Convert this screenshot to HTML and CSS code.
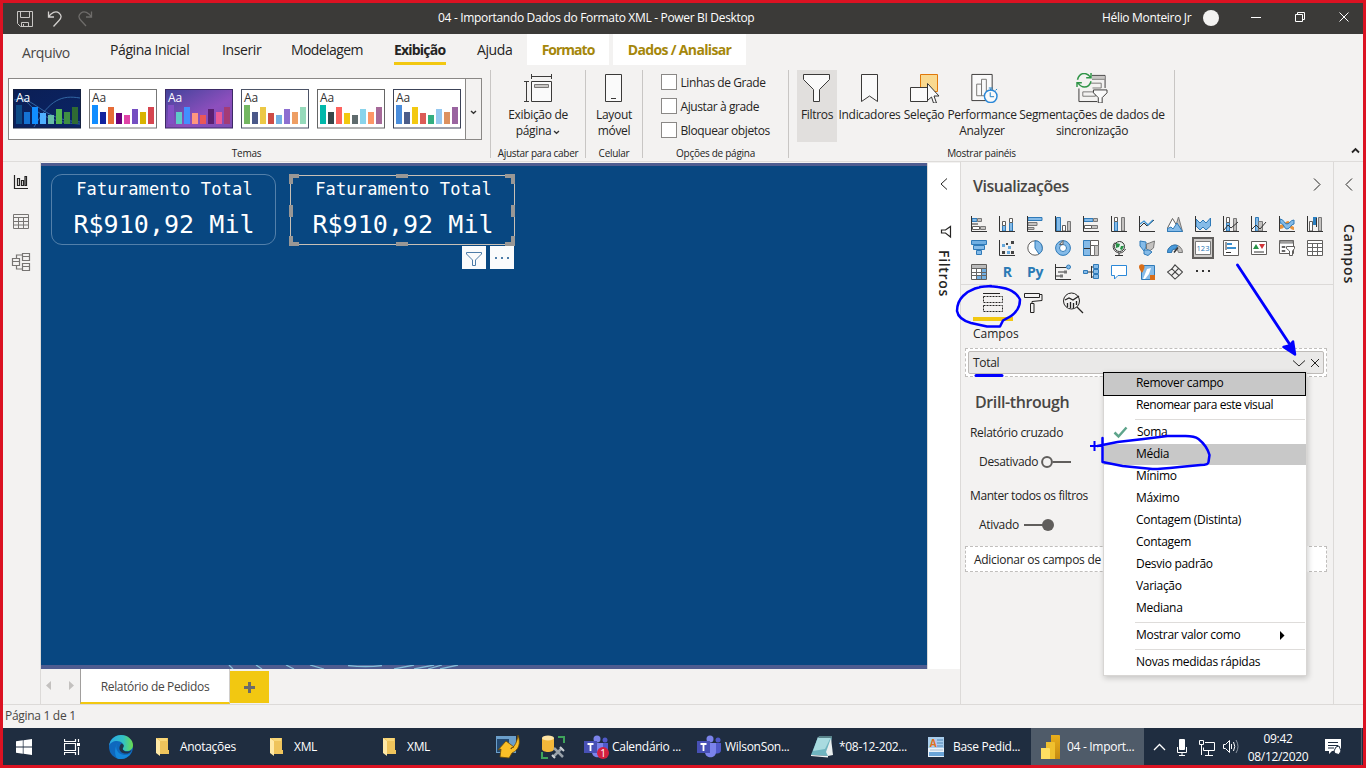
FILE: index.html
```html
<!DOCTYPE html>
<html lang="pt-BR">
<head>
<meta charset="utf-8">
<title>04 - Importando Dados do Formato XML - Power BI Desktop</title>
<link rel="stylesheet" href="styles.css">
</head>
<body>
<div class="frame">
  <header class="titlebar">
    <div class="quick">
      <svg width="16" height="16" viewBox="0 0 16 16" fill="none" stroke="#c8c6c4"><path d="M.5.5h15v15h-12l-3-3zM3.5.5v6h9v-6M4.5 15.500v-4h7v4M6.500 13v2"/></svg>
      <svg width="16" height="16" viewBox="0 0 16 16" fill="none" stroke="#d2d0ce" stroke-width="1.300"><path d="M1.500.5v5.500h5.500M1.500 6C4 1.500 9-.5 12 2s2.500 5 0 7.500l-5.500 6"/></svg>
      <svg width="16" height="16" viewBox="0 0 16 16" fill="none" stroke="#6e6c6a" stroke-width="1.300"><path d="M14.500.5v5.500H9M14.500 6C12 1.500 7-.5 4 2s-2.500 5 0 7.500l5 5.500"/></svg>
    </div>
    <div class="doc-title">04 - Importando Dados do Formato XML - Power BI Desktop</div>
    <div class="account"><span>Hélio Monteiro Jr</span><i class="avatar"></i></div>
    <svg class="window-buttons" width="110" height="31" viewBox="1250 3 110 31" fill="none" stroke="#fff"><path d="M1251 17.500h10M1295.500 14.500h7v7h-7zM1297.500 14.500v-2h7v7h-2M1339.500 12.500l9 9M1348.500 12.500l-9 9"/></svg>
  </header>

  <nav class="tabs">
    <span class="tab file">Arquivo</span>
    <span class="tab inicial">Página Inicial</span>
    <span class="tab inserir">Inserir</span>
    <span class="tab modelagem">Modelagem</span>
    <span class="tab current">Exibição</span>
    <span class="tab ajuda">Ajuda</span>
    <span class="tab context formato">Formato</span>
    <span class="tab context dados">Dados / Analisar</span>
  </nav>

  <section class="ribbon">
    <div class="group temas">
      <div class="gallery">
        <svg class="thumbs" width="456" height="60" viewBox="9 79 456 60">
          <defs>
            <linearGradient id="purple" x2="1" y2="1"><stop stop-color="#41439a"/><stop offset=".6" stop-color="#8d4fbd"/><stop offset="1" stop-color="#7d4fb4"/></linearGradient>
            <linearGradient id="navy" x2="1" y2="1"><stop stop-color="#0b1f55"/><stop offset="1" stop-color="#0a2466"/></linearGradient>
          </defs>
          <g stroke="#474747">
            <rect x="13.500" y="89.500" width="67" height="38.500" fill="url(#navy)" stroke="#14203f"/>
            <rect x="89.500" y="89.500" width="67" height="38.500" fill="#fff" stroke="#777"/>
            <rect x="165.500" y="89.500" width="67" height="38.500" fill="url(#purple)" stroke="#3d2a66"/>
            <rect x="241.500" y="89.500" width="67" height="38.500" fill="#fff" stroke="#4c5366"/>
            <rect x="317.500" y="89.500" width="67" height="38.500" fill="#fff" stroke="#666"/>
            <rect x="393.500" y="89.500" width="67" height="38.500" fill="#fff" stroke="#3c4358"/>
          </g>
          <path d="M20 94c12 14 22 28 60 30M14 100c20-6 26 20 66 22M34 127c16-28 28-32 46-29" fill="none" stroke="#3c78b4" opacity=".8"/>
          <g transform="translate(16 124)"><path fill="#0d4b86" d="M0 0v-19h6V0z"/><path fill="#1573d3" d="M8 0v-12h6V0z"/><path fill="#118dff" d="M16 0v-17h6V0z"/><path fill="#4fb0ff" d="M24 0v-11h6V0z"/><path fill="#66bda8" d="M32 0v-9h6V0z"/><path fill="#53b552" d="M40 0v-15h6V0z"/><path fill="#3f8f43" d="M48 0v-12h6V0z"/><path fill="#2f6b33" d="M56 0v-17h6V0z"/></g>
          <g transform="translate(92 124)"><path fill="#118dff" d="M0 0v-19h6V0z"/><path fill="#12239e" d="M8 0v-12h6V0z"/><path fill="#e66c37" d="M16 0v-17h6V0z"/><path fill="#6b007b" d="M24 0v-11h6V0z"/><path fill="#e044a7" d="M32 0v-9h6V0z"/><path fill="#744ec2" d="M40 0v-15h6V0z"/><path fill="#d9b300" d="M48 0v-12h6V0z"/><path fill="#d64550" d="M56 0v-17h6V0z"/></g>
          <g transform="translate(168 124)"><path fill="#8250c4" d="M0 0v-19h6V0z"/><path fill="#5ecbc8" d="M8 0v-12h6V0z"/><path fill="#438fff" d="M16 0v-17h6V0z"/><path fill="#ff977e" d="M24 0v-11h6V0z"/><path fill="#eb5757" d="M32 0v-9h6V0z"/><path fill="#5b2071" d="M40 0v-15h6V0z"/><path fill="#ec5a96" d="M48 0v-12h6V0z"/><path fill="#a43b76" d="M56 0v-17h6V0z"/></g>
          <g transform="translate(244 124)"><path fill="#73b761" d="M0 0v-19h6V0z"/><path fill="#4a588a" d="M8 0v-12h6V0z"/><path fill="#ecc846" d="M16 0v-17h6V0z"/><path fill="#cd4c46" d="M24 0v-11h6V0z"/><path fill="#71afe2" d="M32 0v-9h6V0z"/><path fill="#8d6fd1" d="M40 0v-15h6V0z"/><path fill="#ee9e64" d="M48 0v-12h6V0z"/><path fill="#95dabb" d="M56 0v-17h6V0z"/></g>
          <g transform="translate(320 124)"><path fill="#01b8aa" d="M0 0v-19h6V0z"/><path fill="#374649" d="M8 0v-12h6V0z"/><path fill="#fd625e" d="M16 0v-17h6V0z"/><path fill="#f2c80f" d="M24 0v-11h6V0z"/><path fill="#5f6b6d" d="M32 0v-9h6V0z"/><path fill="#8ad4eb" d="M40 0v-15h6V0z"/><path fill="#fe9666" d="M48 0v-12h6V0z"/><path fill="#a66999" d="M56 0v-17h6V0z"/></g>
          <g transform="translate(396 124)"><path fill="#4a8ddc" d="M0 0v-19h6V0z"/><path fill="#4c5d8a" d="M8 0v-12h6V0z"/><path fill="#f3c911" d="M16 0v-17h6V0z"/><path fill="#dc5b57" d="M24 0v-11h6V0z"/><path fill="#33ae81" d="M32 0v-9h6V0z"/><path fill="#95c8f0" d="M40 0v-15h6V0z"/><path fill="#dd915f" d="M48 0v-12h6V0z"/><path fill="#9a64a0" d="M56 0v-17h6V0z"/></g>
          <g class="aa"><text x="16" y="102" fill="#fff">Aa</text><text x="92" y="102">Aa</text><text x="168" y="102" fill="#fff">Aa</text><text x="244" y="102">Aa</text><text x="320" y="102">Aa</text><text x="396" y="102">Aa</text></g>
        </svg>
        <div class="more"><svg width="7" height="5" viewBox="0 0 7 5" fill="none" stroke="#333" stroke-width="1.400"><path d="M1 1l2.500 2.300L6 1"/></svg></div>
      </div>
      <div class="caption">Temas</div>
    </div>

    <div class="group caber">
      <div class="tool"><svg width="30" height="30" viewBox="523 73 30 30" fill="none" stroke="#3b3a39"><path d="M531.500 81.500h20v20h-20z" fill="#fafafa"/><path d="M534.500 84.500h14v3h-14z" fill="#c8c6c4" stroke="#797775"/><path d="M531.500 74v5M551.500 74v5M531.500 76.500h20M524 81.500h5M524 101.500h5M526.500 81.500v20"/></svg>
        <span>Exibição de</span><span>página<svg class="caret" width="7" height="5" viewBox="0 0 7 5" fill="none" stroke="#333" stroke-width="1.300"><path d="M1 1l2.500 2.300L6 1"/></svg></span></div>
      <div class="caption">Ajustar para caber</div>
    </div>

    <div class="group celular">
      <div class="tool"><svg width="30" height="30" viewBox="599 73 30 30" fill="#fafafa" stroke="#3b3a39"><path d="M605.500 74.500h16v27h-16zM611 98.500h5"/></svg>
        <span>Layout</span><span>móvel</span></div>
      <div class="caption">Celular</div>
    </div>

    <div class="group opcoes">
      <div class="checks">
        <label><i></i><span>Linhas de Grade</span></label>
        <label><i></i><span>Ajustar à grade</span></label>
        <label><i></i><span>Bloquear objetos</span></label>
      </div>
      <div class="caption">Opções de página</div>
    </div>

    <div class="group paineis">
      <div class="tools">
        <div class="tool pressed"><svg width="30" height="30" viewBox="802 73 30 30" fill="#fafafa" stroke="#3b3a39"><path d="M803.500 74.500h26v5l-10 10v12h-6v-12l-10-10z"/></svg><span>Filtros</span></div>
        <div class="tool indic"><svg width="31" height="30" viewBox="854 73 31 30" fill="#fafafa" stroke="#3b3a39"><path d="M861.500 74.500h16v27l-8-5.500-8 5.500z"/></svg><span>Indicadores</span></div>
        <div class="tool selec"><svg width="32" height="30" viewBox="908 73 32 30" fill="#fafafa" stroke="#3b3a39"><path d="M920.500 74.500h17v17h-17z" fill="#f9d98f" stroke="#e0780a"/><path d="M910.500 87.500h17v14h-17z"/><path d="M927.500 83.500v17l4-3.500 2 6h3l-2.500-7h5z" stroke="#333"/></svg><span>Seleção</span></div>
        <div class="tool perf"><svg width="34" height="31" viewBox="965 73 34 31" fill="#fafafa" stroke="#3b3a39"><path d="M971.500 74.500h21v27h-21z"/><path d="M976.500 84.500h5v12h-5zM981.500 79.500h5v17h-5z" stroke="#797775"/><circle cx="991" cy="97" r="6.500" stroke="#2b88d8" stroke-width="1.500"/><path d="M989 88.500h4M991 89v2M996 91l1.500-1.500M990.500 93v4.500h4" stroke="#1b7cc4" fill="none"/></svg><span>Performance</span><span>Analyzer</span></div>
        <div class="tool segm"><svg width="34" height="31" viewBox="1075 72 34 31" fill="none" stroke="#3b3a39"><path d="M1078.500 88v13.500h19M1092 74.500h13.500v13"/><path d="M1092 75h13v3h-13z" fill="#c8c6c4" stroke="none"/><path d="M1092 78.500h13M1091 82.500h10.500v5h-9M1082.500 91.500h13v4.500h-13z" stroke="#797775"/><path d="M1093.500 89.500h14v3l-5 5v5.500h-4v-5.500l-5-5z" fill="#fafafa"/><path d="M1077 79c1-4 4-6.500 7-6.500s5 2 6.500 4M1091 72v5h-5M1091 80.500c-1 4-4 6-7 6s-5-2-6.500-4M1076.500 86.500v-4.500h5" stroke="#2f9447" stroke-width="1.500"/></svg><span>Segmentações de dados de</span><span>sincronização</span></div>
      </div>
      <div class="caption">Mostrar painéis</div>
    </div>
    <svg class="collapse" width="9" height="7" viewBox="0 0 9 7" fill="none" stroke="#252423" stroke-width="1.800"><path d="M1 5.500l3.500-3.500L8 5.500"/></svg>
  </section>

  <main class="work">
    <aside class="rail">
      <svg width="38" height="120" viewBox="3 163 38 120" fill="none" stroke="#767472"><path d="M14.500 175v13.500H28M17.500 178.500h2v7h-2zM21.500 180.500h2v5h-2zM25 176.500h1.500v9H25z" stroke="#252423" stroke-width="1.200"/><path d="M13.500 214.500h15v14h-15zM13.500 217.500h15M13.500 221.500h15M13.500 225h15M18.500 217v11M23.500 217v11"/><path d="M12.500 258.500h7v7h-7zM12.500 261.500h7M22.500 253.500h7v7h-7zM22.500 256.500h7M22.500 263.500h7v7h-7zM22.500 266.500h7M16.500 258v-3h6M16.500 266v3h6" stroke-width="1.200"/></svg>
    </aside>

    <div class="center">
      <div class="stage">
        <div class="canvas">
          <svg class="arcs" width="260" height="4" viewBox="0 0 260 4" fill="none" stroke="#86bdd8" stroke-width="1.300"><path d="M1 0l4 4M28 0l6 4M58 0l8 4M82 0l14 4M120 .500q18 2 34 0M166 4l20-4M186 4l20-4M200 4l14-4M212 4l18-4"/></svg>
          <div class="card one"><span class="measure">Faturamento Total</span><span class="value">R$910,92 Mil</span></div>
          <div class="card two"><span class="measure">Faturamento Total</span><span class="value">R$910,92 Mil</span>
            <svg class="handles" width="228" height="74" viewBox="0 0 228 74" fill="#999795"><path d="M1 1h10v4H5v6H1zM217 1h10v10h-4V5h-6zM1 63h4v6h6v4H1zM223 63h4v10h-10v-4h6zM108 1h12v4h-12zM108 69h12v4h-12zM1 32h4v12H1zM223 32h4v12h-4z"/></svg>
            <div class="card-tools">
              <i><svg width="24" height="23" viewBox="0 0 24 23" fill="none" stroke="#4d7ca8"><path d="M4.500 6.500h15v1.500l-6 6v5.500h-3V14l-6-6z"/></svg></i>
              <i><svg width="24" height="23" viewBox="0 0 24 23" fill="#4d7ca8"><path d="M5 11h2v2H5zM11 11h2v2h-2zM17 11h2v2h-2z"/></svg></i>
            </div>
          </div>
        </div>
        <aside class="filters">
          <svg width="32" height="80" viewBox="928 163 32 80" fill="none" stroke="#252423"><path d="M947 178.500l-6 5.500 6 5.500"/><path d="M950.500 226.500v10.500l-5-4h-4v-3h4z" stroke-width="1.200"/></svg>
          <span class="vertical">Filtros</span>
        </aside>
      </div>
      <div class="pages">
        <svg width="39" height="35" viewBox="41 669 39 35" fill="#c3c1bf"><path d="M51 681v9l-5-4.500zM69 681v9l5-4.500z"/></svg>
        <div class="page">Relatório de Pedidos</div>
        <div class="add"><svg width="11" height="11" viewBox="0 0 11 11" fill="#6b6a68"><path d="M4 0h3v4h4v3H7v4H4V7H0V4h4z"/></svg></div>
      </div>
    </div>

    <aside class="viz">
      <div class="viz-head"><h2>Visualizações</h2><svg width="8" height="13" viewBox="0 0 8 13" fill="none" stroke="#252423"><path d="M1 .5l6 6-6 6"/></svg></div>
      <div class="viz-grid">
        <svg viewBox="0 0 16 16"><path class="b" d="M1 2.500h5v3H1z"/><path class="g" d="M6.500 2.500h4v3h-4zM9.500 10.500h5v3h-5z"/><path class="w" d="M1.500 10.500h7v3h-7z"/><path class="k" d="M.5 0v15.500H16M1 8h6"/></svg>
        <svg viewBox="0 0 16 16"><path class="b" d="M3.500 9.500h3V15h-3zM10.500 6.500h3V15h-3z"/><path class="w" d="M3.500 5.500h3v4h-3zM10.500 2.500h3v4h-3z"/><path class="k" d="M.5 0v15.500H16"/></svg>
        <svg viewBox="0 0 16 16"><path class="b" d="M1 1.500h14v3H1z"/><path class="g" d="M1 6.500h9v3H1zM1 11.500h6v2H1z"/><path class="k" d="M.5 0v15.500H16"/></svg>
        <svg viewBox="0 0 16 16"><path class="b" d="M1.500 1.500h4V15h-4z"/><path class="w" d="M7.500 9.500h3V15h-3z"/><path class="g" d="M12.500 5.500h3V15h-3z"/><path class="k" d="M.5 0v15.500H16"/></svg>
        <svg viewBox="0 0 16 16"><path class="b" d="M1 2.500h9v3H1z"/><path class="g" d="M10.500 2.500h4v3h-4zM8.500 9.500h6v3h-6z"/><path class="w" d="M1.500 9.500h7v3h-7z"/><path class="k" d="M.5 0v15.500H16"/></svg>
        <svg viewBox="0 0 16 16"><path class="b" d="M3.500 5.500h3V15h-3z"/><path class="w" d="M3.500 1.500h3v4h-3z"/><path class="g" d="M10.500 1.500h3V15h-3z"/><path class="k" d="M.5 0v15.500H16"/></svg>
        <svg viewBox="0 0 16 16"><path class="k" d="M.5 0v15.500H16M1 11l4-4 3 3 7-6"/><path d="M1 8l4-3 4 4 5-5" fill="none" stroke="#3a8fcf" stroke-width="1.300"/></svg>
        <svg viewBox="0 0 16 16"><path class="g" d="M11.500 1l4 14.500H7z"/><path class="w" d="M5.500 2.500l8 13H.5V12z"/><path class="b" d="M.5 15.500v-3L4 11l2 2 4-6 5.500 8.500z"/></svg>
        <svg viewBox="0 0 16 16"><path class="b" d="M1 3l4 4 3-3 3 3 4.500-5v8L11 14l-3-3-3 3-4-4z"/><path class="k" d="M.5 0v15.500H16"/></svg>
        <svg viewBox="0 0 16 16"><path class="b" d="M3.500 6.500h3V15h-3z"/><path class="w" d="M3.500 1.500h3v5h-3z"/><path class="g" d="M10.500 2.500h3V15h-3z"/><path class="k" d="M.5 0v15.500H16M1 14l4-5 3 3 7-6"/></svg>
        <svg viewBox="0 0 16 16"><path class="b" d="M4.500 1.500h3V15h-3z"/><path class="g" d="M7.500 5.500h4V15h-4z"/><path class="k" d="M.5 0v15.500H16M1 13l4-4 4 4 6-7"/></svg>
        <svg viewBox="0 0 16 16"><path d="M1 9c5-1 6-4 8-4s3 5 6 6v3c-4 0-5-5-7-5s-3 4-7 4z" fill="#e8923c"/><path class="b" d="M1 3c4 0 4 5 7 5s3-4 7-4v4c-3 0-4 5-7 5S5 7 1 7z"/><path class="k" d="M.5 0v15.500H16"/></svg>
        <svg viewBox="0 0 16 16"><path class="w" d="M2.500 5.500h3V15h-3z"/><path d="M6 1h4v8H6z" fill="#2b7fc0"/><path class="g" d="M11.500 1.500h3V15h-3z"/><path class="k" d="M.5 0v15.500H16M9.500 2v9"/></svg>

        <svg viewBox="0 0 16 16"><path d="M.5.5h15v4H.5z" fill="#71afe2" stroke="#2f7ab8"/><path class="b" d="M2.500 5.500h11v4h-11zM5.500 10.500h5v4h-5z"/></svg>
        <svg viewBox="0 0 16 16"><path class="k" d="M.5 0v15.500H16"/><path d="M3 4h3v3H3zM9 6h3v3H9zM8 11h3v3H8z" fill="#65a7dc"/><path d="M7 3h2v2H7zM12 1h3v3h-3zM12 11h3v3h-3zM3 11h3v3H3z" fill="#444"/></svg>
        <svg viewBox="0 0 16 16"><circle class="w" cx="8" cy="8" r="7.200"/><path class="b" d="M8 .8A7.200 7.200 0 0 1 12 14L8 8z"/></svg>
        <svg viewBox="0 0 16 16"><circle cx="8" cy="8" r="5.500" fill="none" stroke="#85bbe8" stroke-width="4"/><circle cx="8" cy="8" r="7.400" fill="none" stroke="#2f7ab8"/><circle cx="8" cy="8" r="3.500" fill="#fff" stroke="#2f7ab8"/><path d="M8 .5v4H4.500z" fill="#ddd" stroke="#666"/></svg>
        <svg viewBox="0 0 16 16"><path class="b" d="M.5.5h7v15h-7z"/><path class="k" d="M1 8.500h6"/><path class="w" d="M7.500.5h8v5h-8zM7.500 5.500h4v10h-4z"/><path class="g" d="M11.500 5.500h4v10h-4z"/></svg>
        <svg viewBox="0 0 16 16"><circle cx="8.500" cy="6.500" r="5" fill="#e8f2ec" stroke="#333"/><path d="M5 3l4 1-1 3-3 1zM10 6h3l-2 4-2-1z" fill="#279246"/><path class="k" d="M4 2.500c-4 4-1 10 4.500 10.500 3 0 5-2 6-4M8 13v2M4 15.500h8"/></svg>
        <svg viewBox="0 0 16 16"><path class="b" d="M1 1l6 1v5l-2 4-4-5z"/><path class="g" d="M7.500 4l3-1 5-2-1 7-4 3-3-2z"/><path class="b" d="M5 10h5l3 2-4 3.500L5 14z"/></svg>
        <svg viewBox="0 0 16 16"><path class="g" d="M.5 12.500A7.500 7.500 0 0 1 15.500 12.500h-4a3.500 3.500 0 0 0-7 0z"/><path d="M.5 12.500A7.500 7.500 0 0 1 10.500 5.500L8.500 9a3.700 3.700 0 0 0-4 3.500z" fill="#4a9bdc" stroke="#2f7ab8"/><path class="k" d="M7 12.500l4-5" stroke-width="1.500"/></svg>
        <span class="chosen"><svg viewBox="0 0 16 16"><path d="M.5 1.500h15v13H.5z" fill="#fff" stroke="#777"/><text x="8" y="11" class="num">123</text></svg></span>
        <svg viewBox="0 0 16 16"><path class="w" d="M.5.5h15v15H.5z"/><path d="M4 3h5v2H4zM4 7h9v2H4z" fill="#3a8fcf"/><path class="k" d="M3 2v8M3 12.500h5"/></svg>
        <svg viewBox="0 0 16 16"><path class="w" d="M.5 1.500h15v13H.5z"/><path d="M2 9l3-5 3 5z" fill="#279246"/><path d="M8 4h6l-3 5z" fill="#d13438"/><path d="M3 12h10" class="k"/></svg>
        <svg viewBox="0 0 16 16"><path class="w" d="M.5.5h14v13H.5z"/><path class="g" d="M1 1h13v2H1z"/><path class="o" d="M3 6.500h3v1H3zM3 10.500h3v1H3z"/><path class="w" d="M7.500 6.500h8v2L13.500 11v4.500h-3V11l-3-2.500z"/></svg>
        <svg viewBox="0 0 16 16"><path class="w" d="M.5.5h15v15H.5z"/><path class="o" d="M.5 3.500h15M.5 7.500h15M.5 11.500h15M5.500 3v12M10.500 3v12"/></svg>

        <svg viewBox="0 0 16 16"><path class="w" d="M.5.5h15v15H.5z"/><path d="M1 1h14v3H1z" fill="#bbb"/><path d="M5 12h10v3H5zM11 5h4v10h-4z" fill="#71afe2"/><path class="o" d="M.5 4.500h15M.5 8.500h15M.5 11.500h15M5.500 4v11M10.500 4v11"/></svg>
        <span class="lang">R</span>
        <span class="lang">Py</span>
        <svg viewBox="0 0 16 16"><path class="k" d="M.5 0v15.500H16M1 3.500h10M3 8h7M1 12h4"/><circle cx="13.500" cy="3" r="2" class="b"/><path d="M9 6.500h3v3H9zM5 10.500h3v3H5z" fill="#777"/></svg>
        <svg viewBox="0 0 16 16"><path class="k" d="M5 8h5M8.500 2v12M9 3h3M9 13h3"/><path class="b" d="M.5 6.500h4v3h-4zM10.500.5h5v4h-5zM10.500 5.500h5v4h-5zM10.500 10.500h5v4h-5z"/></svg>
        <svg viewBox="0 0 16 16"><path d="M.5 1.500h15v10H7L3.500 15v-3.500h-3z" fill="#fff" stroke="#2b88d8"/></svg>
        <svg viewBox="0 0 16 16"><path class="b" d="M2.500 1.500h13v14h-13z"/><path d="M8 5l4-1-2 6-4 5H4z" fill="#fff"/><path d="M0 3a2.700 2.700 0 0 1 5.500 0C5.500 5 3 9 3 9S0 5 0 3z" fill="#d86d18"/><path d="M11 11h5v5h-5z" fill="#d86d18"/></svg>
        <svg viewBox="-1 -1 18 18"><path d="M4.500 4.500L8 0l4 4-8 8-4.500-4zM8 0l8.500 8-4 4L4 4M4 12l4 4 4.500-4L8 8z" fill="none" stroke="#444" stroke-width="1.200"/></svg>
        <svg viewBox="0 0 16 16" fill="#333"><path d="M1 6h2v2H1zM7 6h2v2H7zM13 6h2v2h-2z"/></svg>
      </div>
      <div class="modes">
        <svg width="120" height="32" viewBox="973 290 120 32" fill="none" stroke="#252423"><path d="M983 293.500h17"/><path d="M983.500 296.500h19v6h-19zM983.500 305.500h19v6h-19z" stroke-dasharray="2 1"/><path d="M1024.500 293.500h15v4h-15zM1040 294.500h2v6l-10 1v2M1030.500 303.500h3.500v9h-3.500z"/><circle cx="1071.500" cy="301" r="8"/><path d="M1077 307l6 6M1065 300l4-2 4 2 6-4M1067.500 303v4M1070.500 302v6M1073.500 303v5M1076.500 301v4" stroke-width="1.300"/><path d="M973 317h40v4h-40z" fill="#f2c811" stroke="none"/></svg>
      </div>
      <div class="label campos-label">Campos</div>
      <div class="well">
        <div class="pill"><span>Total</span><svg width="28" height="10" viewBox="1292 358 28 10" fill="none" stroke="#252423"><path d="M1293 360.500l6 5.500 6-5.500M1311 359l8 8M1319 359l-8 8"/></svg></div>
      </div>
      <h3>Drill-through</h3>
      <div class="label cruzado">Relatório cruzado</div>
      <div class="toggle off"><span>Desativado</span><svg width="30" height="12" viewBox="0 0 30 12" fill="none" stroke="#605e5c"><circle cx="6" cy="6" r="4.900" stroke-width="2"/><path d="M11.500 6H30" stroke-width="2"/></svg></div>
      <div class="label manter">Manter todos os filtros</div>
      <div class="toggle on"><span>Ativado</span><svg width="30" height="12" viewBox="0 0 30 12" fill="#605e5c"><circle cx="24" cy="6" r="6"/><path d="M0 5h20v2H0z"/></svg></div>
      <div class="dropzone">Adicionar os campos de</div>
    </aside>

    <aside class="fields">
      <svg width="9" height="13" viewBox="0 0 9 13" fill="none" stroke="#252423"><path d="M8 .5l-6 6 6 6"/></svg>
      <span class="vertical">Campos</span>
    </aside>
  </main>

  <footer class="status">Página 1 de 1</footer>

  <div class="taskbar">
    <div class="task start"><svg width="16" height="16" viewBox="0 0 16 16" fill="#fff"><path d="M0 2.300L6.800 1.300v6.300H0zM7.500 1.200L16 0v7.600H7.500zM0 8.400h6.800v6.400L0 13.800zM7.500 8.400H16V16l-8.500-1.200z"/></svg></div>
    <div class="task view"><svg width="17" height="16" viewBox="0 0 17 16" fill="none" stroke="#fff"><path d="M.5 0v2.500h11V0M.5 4.500h11v7H.5zM.5 16v-2.500h11V16M14.500 0v3M14.500 8v8" stroke-width="1.200"/><path d="M13 4h3v3h-3z" fill="#fff" stroke="none"/></svg></div>
    <div class="task edge"><svg width="24" height="24" viewBox="0 0 24 24"><defs><linearGradient id="eg" x1="0" x2="1"><stop stop-color="#2aa7e8"/><stop offset=".6" stop-color="#33c2c2"/><stop offset="1" stop-color="#6bdc4b"/></linearGradient></defs><circle cx="12" cy="12" r="12" fill="#0f68bd"/><path d="M0 11C1 4 6 0 12 0c7 0 12 5 12 10 0 4-3 6-6 6-4 0-5-2-4-3.500C16 9 12 6 8 6 4 6 1 8 0 11z" fill="url(#eg)"/><path d="M9 8c-4 4-1 11 6 12 3 .4 6-1 7-2-3 5-8 6.500-12 6C4 23 6 10 9 8z" fill="#1387dc"/><path d="M12.500 8.500c3 1 2.500 3 1.500 4.500s1 3.500 4 3.500c1.500 0 3-.3 4.500-1.500-1 3-4 4-7 3.500-5-.8-7-6-3-10z" fill="#20344a"/></svg></div>
    <div class="task folder f1"><svg width="15" height="20" viewBox="0 0 15 20"><path d="M1 1h12v12h1v4H4z" fill="#efc45c"/><path d="M1 1l4 3v15l-4-3z" fill="#ffe9a6"/><path d="M5 4h7V1H3z" fill="#f9d778"/></svg><span>Anotações</span></div>
    <div class="task folder f2"><svg width="15" height="20" viewBox="0 0 15 20"><path d="M1 1h12v12h1v4H4z" fill="#efc45c"/><path d="M1 1l4 3v15l-4-3z" fill="#ffe9a6"/><path d="M5 4h7V1H3z" fill="#f9d778"/></svg><span>XML</span></div>
    <div class="task folder f3"><svg width="15" height="20" viewBox="0 0 15 20"><path d="M1 1h12v12h1v4H4z" fill="#efc45c"/><path d="M1 1l4 3v15l-4-3z" fill="#ffe9a6"/><path d="M5 4h7V1H3z" fill="#f9d778"/></svg><span>XML</span></div>
    <div class="task arrow"><svg width="24" height="24" viewBox="0 0 24 24"><path d="M0 1h20v17H0z" fill="#6b9fcb"/><path d="M1 4h12v13H1z" fill="#244a72"/><path d="M22 0c3 8 1 15-6 18l-3 5-9-1 1-8-3 1 8-9 8 6-3 1v1c4-3 6-7 7-14z" fill="#fbbf27" stroke="#6b4a08" stroke-width=".8"/></svg></div>
    <div class="task db"><svg width="24" height="24" viewBox="0 0 24 24"><path d="M1 3v11c0 4 12 4 12 0V3z" fill="#f3b73a"/><ellipse cx="7" cy="3" rx="6" ry="2.500" fill="#ffe4a4"/><path d="M17 2h6v6M1 17v6h6" fill="none" stroke="#3fa45b" stroke-width="2"/><path d="M12 22l9-9M13 13l9 9" stroke="#9aa2aa" stroke-width="2.500"/><path d="M19 12l4 4M11 20l3 3" stroke="#c8cdd1" stroke-width="2"/></svg></div>
    <div class="task teams"><svg width="26" height="24" viewBox="0 0 26 24"><circle cx="13" cy="4" r="3.500" fill="#7b83eb"/><circle cx="21" cy="5" r="2.500" fill="#5059c9"/><path d="M17 8h7v7c0 4-5 4-7 3z" fill="#5059c9"/><path d="M8 8h11v9c0 7-11 7-11 0z" fill="#7b83eb"/><path d="M0 6h13v12H0z" fill="#4750b5"/><path d="M3.500 9h6M6.500 9v7" stroke="#fff" stroke-width="1.800"/><circle cx="19" cy="18" r="6" fill="#d3203f"/><text x="19" y="22" class="badge">1</text></svg><span>Calendário ...</span></div>
    <div class="task teams"><svg width="26" height="24" viewBox="0 0 26 24"><circle cx="13" cy="4" r="3.500" fill="#7b83eb"/><circle cx="21" cy="5" r="2.500" fill="#5059c9"/><path d="M17 8h7v7c0 4-5 4-7 3z" fill="#5059c9"/><path d="M8 8h11v9c0 7-11 7-11 0z" fill="#7b83eb"/><path d="M0 6h13v12H0z" fill="#4750b5"/><path d="M3.500 9h6M6.500 9v7" stroke="#fff" stroke-width="1.800"/></svg><span>WilsonSon...</span></div>
    <div class="task note"><svg width="24" height="24" viewBox="0 0 24 24"><path d="M7 2h14L17 21 0 20z" fill="#6fb4bf"/><path d="M7 2h13l-6 12-12 2z" fill="#a9dbe0"/><path d="M20 3l2 17-5 1-2-4z" fill="#e9eeee"/><path d="M0 20l17 1v1.500L0 21z" fill="#f5f5f5"/><path d="M8 1h13v2H7z" fill="#59838a"/></svg><span>*08-12-202...</span></div>
    <div class="task base"><svg width="20" height="22" viewBox="0 0 20 22"><path d="M1 1h16v20H1z" fill="#eaf2fa"/><path d="M1 1h16v11H1z" fill="#a9cdec"/><path d="M10 4h6M10 7h6M10 10h6" stroke="#4f86b8"/><path d="M3 14h13" stroke="#a8bccf"/><path d="M2 16h15v4H2z" fill="#6aa4d8"/><text x="6" y="11" class="letter">A</text></svg><span>Base Pedid...</span></div>
    <div class="task pbi"><svg width="20" height="24" viewBox="0 0 20 24"><defs><linearGradient id="pb" x2="0" y2="1"><stop stop-color="#e8ae1c"/><stop offset="1" stop-color="#c58a10"/></linearGradient></defs><path d="M10 0h8a1 1 0 0 1 1 1v23h-9z" fill="url(#pb)"/><path d="M5 7h8a1 1 0 0 1 1 1v16H5z" fill="#f0c02e"/><path d="M0 13h8a1 1 0 0 1 1 1v10H0z" fill="#ffdf62"/></svg><span>04 - Import...</span></div>
    <svg class="tray" width="100" height="24" viewBox="1150 736 100 24" fill="none" stroke="#fff"><path d="M1154 751l5.500-5.500 5.500 5.500" stroke-width="1.300"/><rect x="1179" y="740" width="6" height="11" rx="1" fill="#fff" stroke="none"/><path d="M1177.500 748v5.500h9V748M1182 754v3M1179 756.500h6"/><path d="M1205 743.500h9.500v8h-11v-3M1208.500 752v4M1205 756.500h8M1199.500 741.500h4v4h-4zM1201.500 746v10"/><path d="M1223.500 745.500h2l4-4v12l-4-4h-2zM1231.500 745v5M1233.500 743q2.500 4.500 0 9"/><path d="M1236 741q4 6.500 0 13" stroke="#8a94a0"/></svg>
    <div class="clock"><span>09:42</span><span>08/12/2020</span></div>
    <svg class="notice" width="18" height="18" viewBox="0 0 18 18"><path d="M0 1h16v12H7l-3 3v-3H0z" fill="#fff"/><path d="M3 4.500h10M3 7.500h10M3 10h6" stroke="#1f2d40"/><path d="M11 9l3-1 2 5-2 3.500-4-1-1-2.500z" fill="#fff" stroke="#1f2d40"/></svg>
    <i class="peek"></i>
  </div>

  <div class="menu">
    <div class="item focus">Remover campo</div>
    <div class="item second">Renomear para este visual</div>
    <hr>
    <div class="item checked"><svg width="15" height="13" viewBox="0 0 15 13" fill="none" stroke="#5ea48b" stroke-width="2.500"><path d="M1.500 6.500l4 4 8-9"/></svg>Soma</div>
    <div class="item hover">Média</div>
    <div class="item">Mínimo</div>
    <div class="item">Máximo</div>
    <div class="item">Contagem (Distinta)</div>
    <div class="item">Contagem</div>
    <div class="item">Desvio padrão</div>
    <div class="item">Variação</div>
    <div class="item">Mediana</div>
    <hr>
    <div class="item sub">Mostrar valor como<svg width="5" height="9" viewBox="0 0 5 9"><path d="M0 0l4.500 4.500L0 9z"/></svg></div>
    <hr>
    <div class="item">Novas medidas rápidas</div>
  </div>

  <svg class="ink" width="1366" height="768" viewBox="0 0 1366 768" fill="none" stroke="#0000fe" stroke-width="2.500" stroke-linejoin="round" stroke-linecap="round">
    <path d="M991 286c-12 0-22 4-28 10-5 5-6 10-6 15 1 6 7 10 14 12l16 3.500 13 0 3-6c3-2 9-4 12-8 4-4 5-7 5-13-4-8-11-11-22-12.500-6-1-12-1-18 0"/>
    <path d="M976 375.500h26" stroke-width="3"/>
    <path d="M1237.500 265l54 82" stroke-width="2.800"/><path d="M1295 354.500l-11.500-7.500 6-1.500 3.500-4z" fill="#0000fe"/>
    <path d="M1102.500 438v24l20 4 30 3c10 0 18-1 27-2l21-2c6 0 8-1 8-3l1-7c-2-7-6-12-11-16-4-3-8-3-13-3h-18l-24 3-26 3-20 4"/>
    <path d="M1090 446h10M1094.500 441v10" stroke-width="2" stroke-linecap="butt"/>
  </svg>
</div>
</body>
</html>
```
FILE: styles.css
```css
* { box-sizing: border-box; }
body { margin: 0; font: 12px/16px "Open Sans", "Noto Sans", sans-serif; color: #252423; }
svg { flex: none; display: block; }
h2, h3 { margin: 0; font-weight: 600; color: #484644; }
.frame { position: relative; width: 1366px; height: 768px; border: 3px solid #db1222; background: #f3f2f1; display: flex; flex-direction: column; overflow: hidden; white-space: nowrap; }

.titlebar { height: 31px; background: #3b3a38; color: #fff; display: flex; flex: none; align-items: center; font-size: 12px; letter-spacing: -.32px; }
.quick { display: flex; gap: 14px; padding-left: 14px; width: 435px; }
.doc-title { width: 664px; padding-bottom: 2px; }
.account { display: flex; width: 148px; align-items: center; justify-content: space-between; padding-right: 31px; padding-bottom: 1px; }
.avatar { width: 16px; height: 16px; border-radius: 50%; background: #f3f2f1; }

.tabs { height: 32px; flex: none; display: flex; padding-left: 19px; font-size: 14px; line-height: 32px; letter-spacing: -.4px; }
.tab { height: 31px; }
.file { width: 88px; padding-top: 3px; color: #484644; }
.inicial { width: 112px; }
.inserir { width: 69px; }
.modelagem { width: 103px; letter-spacing: -.6px; }
.modelagem { letter-spacing: -.6px; }
.current { width: 52px; margin-right: 31px; font-weight: 700; letter-spacing: -.8px; border-bottom: 3px solid #f2c811; }
.ajuda { width: 50px; }
.context { background: #fff; color: #a5870b; font-weight: 700; text-align: center; }
.formato { width: 82px; margin-right: 4px; letter-spacing: -1px; }
.dados { width: 133px; letter-spacing: -.65px; }

.ribbon { height: 96px; flex: none; display: flex; padding-top: 4px; border-bottom: 1px solid #dedcda; position: relative; letter-spacing: -.32px; }
.group { height: 88px; border-right: 1px solid #c8c6c4; display: flex; flex-direction: column; justify-content: space-between; align-items: center; }
.caption { font-size: 10px; line-height: 10px; letter-spacing: -.28px; }
.temas { width: 488px; padding-top: 8px; }
.caber { width: 95px; }
.celular { width: 57px; }
.opcoes { width: 146px; }
.paineis { width: 386px; }
.gallery { width: 474px; height: 62px; margin-left: -3px; border: 1px solid #8a8886; background: #fff; display: flex; }
.aa { font: 12px "Open Sans", sans-serif; fill: #333; letter-spacing: 0; }
.aa text[fill] { fill: #fff; }
.more { width: 16px; border-left: 1px solid #8a8886; background: #f3f2f1; display: flex; align-items: center; justify-content: center; padding-top: 6px; }
.tool { height: 72px; padding-top: 3px; display: flex; flex-direction: column; align-items: center; }
.tool > svg { margin-bottom: 4px; height: 30px; }
.tool span { line-height: 16px; display: flex; align-items: center; }
.caret { margin: 2px 0 0 2px; }
.checks { width: 130px; padding: 4px 0 0 10px; display: flex; flex-direction: column; gap: 8px; }
.checks label { height: 16px; display: flex; gap: 4px; letter-spacing: -.4px; }
.checks span { padding-top: 1px; }
.checks i { width: 16px; height: 16px; border: 1px solid #8a8886; background: #fff; }
.tools { display: flex; align-self: stretch; padding-left: 8px; }
.pressed { width: 40px; background: #e1dfdd; }
.indic { width: 65px; }
.selec { width: 44px; }
.perf { width: 72px; }
.segm { width: 148px; }
.collapse { position: absolute; right: 3px; bottom: 7px; }

.work { height: 543px; flex: none; display: flex; border-bottom: 1px solid #dcdad8; }
.rail { width: 38px; border-right: 1px solid #dcdad8; padding-top: 1px; }
.center { width: 919px; display: flex; flex-direction: column; }
.stage { display: flex; height: 507px; }
.canvas { width: 886px; margin-top: 1px; background: #084781; border-top: 3px solid #4f5c90; border-bottom: 4px solid #4f5c90; position: relative; }
.arcs { position: absolute; left: 187px; bottom: -4px; }
.card { position: absolute; display: flex; flex-direction: column; align-items: center; color: #fff; font-family: "DejaVu Sans Mono", monospace; }
.one { left: 10px; top: 8px; width: 225px; height: 71px; border: 1px solid #5380aa; border-radius: 11px; }
.two { left: 249px; top: 9px; width: 225px; height: 70px; border: 1px solid #c8c0b6; }
.measure { font-size: 17px; line-height: 20px; margin: 4px 0 0 2px; letter-spacing: .15px; }
.value { font-size: 25px; line-height: 30px; margin: 11px 0 0 1px; letter-spacing: .05px; }
.two .measure { margin-top: 3px; }
.handles { position: absolute; left: -3px; top: -3px; }
.card-tools { position: absolute; right: 0; top: 70px; display: flex; gap: 4px; }
.card-tools i { width: 24px; height: 23px; background: #fafbfc; }
.filters { width: 33px; background: #fff; border-left: 1px solid #dcdad8; margin-top: 1px; }
.vertical { writing-mode: vertical-rl; font-size: 14px; font-weight: 600; line-height: 20px; }
.filters .vertical { margin: 7px 0 0 6px; letter-spacing: .7px; }
.pages { display: flex; height: 35px; }
.page { width: 150px; background: #fff; border-left: 1px solid #a19f9d; border-right: 1px solid #d0cecc; border-bottom: 2px solid #f2c811; text-align: center; line-height: 35px; letter-spacing: -.34px; color: #484644; }
.add { width: 39px; height: 32px; margin-top: 2px; background: #f2c811; display: flex; align-items: center; justify-content: center; }

.viz { width: 373px; border-left: 1px solid #dcdad8; letter-spacing: -.32px; }
.viz-head { display: flex; justify-content: space-between; align-items: center; height: 45px; padding: 0 12px 0 12px; }
.viz-head h2 { font-size: 16px; letter-spacing: -.5px; padding-top: 3px; }
.viz-grid { height: 78px; padding: 9px 0 0 10px; display: grid; grid-template-columns: repeat(13, 28px); grid-auto-rows: 24px; border-bottom: 1px solid #dcdad8; }
.viz-grid svg { width: 16px; height: 16px; }
.k { fill: none; stroke: #333; }
.o { fill: none; stroke: #666; }
.w { fill: #fff; stroke: #605e5c; }
.g { fill: #c4c2c0; stroke: #777; }
.b { fill: #85bbe8; stroke: #2f7ab8; }
.num { font: 7.500px "Open Sans", sans-serif; fill: #2474b5; text-anchor: middle; letter-spacing: 0; }
.lang { width: 18px; height: 18px; margin: -1px 0 0 -1px; font-size: 14px; line-height: 18px; font-weight: 700; color: #2a7ab5; text-align: center; letter-spacing: -.5px; }
.chosen { width: 22px; height: 22px; margin: -3px; border: 2px solid #605e5c; padding: 1px; background: #d0cecc; }
.modes { padding: 5px 0 0 12px; height: 41px; }
.label { height: 16px; }
.campos-label { margin-left: 12px; letter-spacing: 0; }
.well { margin: 6px 6px 0 4px; height: 29px; border: 1px dashed #c0bebc; background: #fff; padding: 2px; }
.pill { height: 23px; border: 1px solid #bebbb8; border-radius: 2px; background: #eae9e8; padding: 0 3px 0 4px; display: flex; justify-content: space-between; align-items: center; }
.viz h3 { font-size: 16px; line-height: 20px; margin: 15px 0 0 14px; letter-spacing: -.4px; }
.cruzado { margin: 13px 0 0 9px; }
.toggle { height: 16px; display: flex; align-items: center; margin: 13px 0 0 18px; }
.toggle span { width: 62px; }
.toggle.on span { width: 45px; }
.manter { margin: 18px 0 0 9px; letter-spacing: -.4px; }
.dropzone { margin: 13px 6px 0 4px; height: 26px; border: 1px dashed #c0bebc; background: #fff; padding-left: 8px; line-height: 25px; letter-spacing: -.28px; }
.fields { width: 30px; border-left: 1px solid #dcdad8; padding: 16px 0 0 5px; }
.fields svg { margin: 0 0 0 5px; }
.fields .vertical { margin-top: 33px; letter-spacing: 1px; }

.status { height: 23px; flex: none; padding-left: 2px; line-height: 21px; letter-spacing: -.3px; color: #484644; }

.taskbar { height: 38px; flex: none; display: flex; background: #1f2d40; color: #fff; letter-spacing: -.3px; align-items: center; position: relative; }
.task { height: 38px; display: flex; align-items: center; }
.start { width: 47px; padding-left: 13px; }
.view { width: 48px; padding-left: 14px; }
.edge { width: 46px; padding-left: 11px; }
.folder { width: 113px; padding-left: 11px; gap: 10px; }
.f2 { padding-left: 12px; }
.f3 { width: 114px; padding-left: 12px; }
.arrow { width: 46px; padding-left: 12px; }
.db { width: 44px; padding-left: 11px; }
.teams { width: 113px; padding-left: 10px; gap: 2px; }
.note { width: 117px; padding-left: 11px; gap: 4px; }
.base { width: 114px; padding-left: 10px; gap: 6px; }
.pbi { width: 113px; padding-left: 10px; gap: 6px; background: #4f5b69; }
.badge { font: 10px "Open Sans", sans-serif; fill: #fff; text-anchor: middle; }
.letter { font: 700 10px "Open Sans", sans-serif; fill: #e0701c; text-anchor: middle; }
.tray { margin-left: 6px; }
.clock { width: 56px; display: flex; flex-direction: column; align-items: center; line-height: 18px; padding-top: 1px; }
.notice { margin-left: 19px; }
.peek { width: 1px; height: 38px; margin-left: 18px; background: #4f5b69; }

.menu { position: absolute; left: 1100px; top: 369px; width: 204px; height: 304px; background: #fff; border: 1px solid #d8d6d4; border-top: 0; box-shadow: 1px 2px 6px rgba(0,0,0,.2); color: #000; letter-spacing: -.3px; }
.item { height: 22px; line-height: 22px; padding-left: 32px; position: relative; }
.focus { height: 24px; line-height: 20px; border: 1px solid #000; margin: 0 0 0 -1px; background: #c8c8c8; }
.second { height: 20px; line-height: 18px; letter-spacing: -.45px; }
.menu hr { margin: 3px 1px 1px 31px; border: 0; border-top: 1px solid #dedcda; }
.checked { display: flex; align-items: center; padding-left: 9px; gap: 9px; }
.hover { border-top: 1px solid #fff; line-height: 20px; background: #c8c8c8; }
.sub { display: flex; align-items: center; justify-content: space-between; padding-right: 21px; }
.ink { position: absolute; left: 0; top: 0; margin: -3px; pointer-events: none; }
```
